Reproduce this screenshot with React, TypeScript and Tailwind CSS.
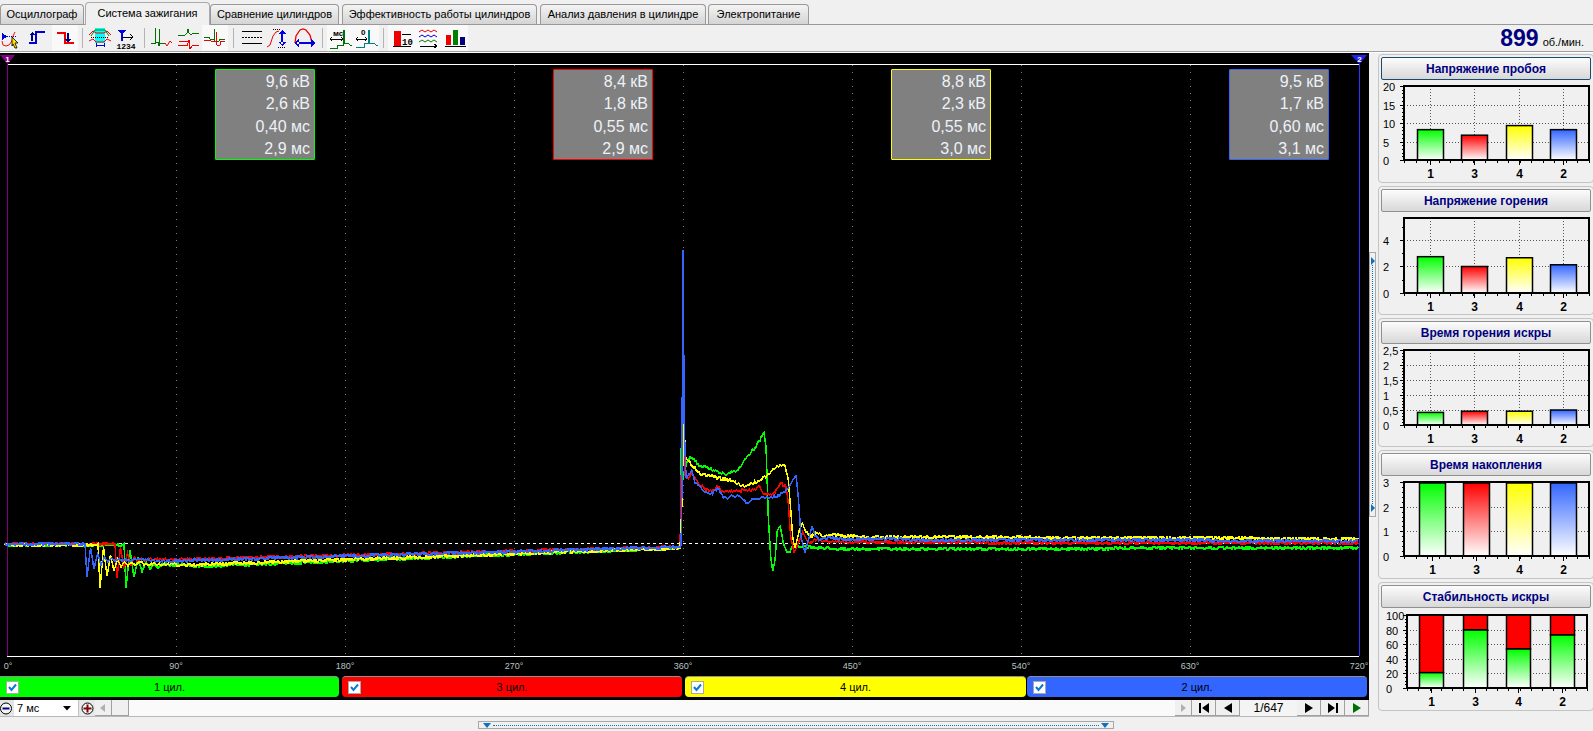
import { ReactNode } from "react";

const GREEN = "#00ff00";
const RED = "#ff0000";
const YELLOW = "#ffff00";
const BLUE = "#3366ff";

const tabs = [
    { label: "Осциллограф", cls: "w-[84px]" },
    { label: "Система зажигания", cls: "w-[125px] ml-[1px]", active: true },
    { label: "Сравнение цилиндров", cls: "w-[129px]" },
    { label: "Эффективность работы цилиндров", cls: "w-[195px] ml-[3px]" },
    { label: "Анализ давления в цилиндре", cls: "w-[166px] ml-[3px]" },
    { label: "Электропитание", cls: "w-[101px] ml-[2px]" },
];

const Tabs = () => (
    <div className="h-[25px] flex items-end border-b border-[#999999] shrink-0 bg-[#f0f0f0] text-[11px] text-black whitespace-nowrap">
        {tabs.map((t) =>
            t.active ? (
                <div key={t.label} className={`${t.cls} h-[23px] -mb-[1px] pb-[2px] flex items-center justify-center bg-[#f0f0f0] border border-b-0 border-[#aaaaaa] rounded-t-[4px]`}>
                    {t.label}
                </div>
            ) : (
                <div key={t.label} className={`${t.cls} h-[20px] flex items-center justify-center bg-gradient-to-b from-[#f4f4f4] to-[#d4d4d4] border border-b-0 border-[#999999] rounded-t-[4px]`}>
                    {t.label}
                </div>
            )
        )}
    </div>
);

const Icon = ({ children, on, w = "w-[26px]" }: { children: ReactNode; on?: boolean; w?: string }) => (
    <div className={`${w} h-[26px] shrink-0 ${on ? "bg-[#f9f9f9]" : ""}`}>
        <svg viewBox="0 0 26 26" className="w-[26px] h-[26px]" fill="none" shapeRendering="crispEdges">
            {children}
        </svg>
    </div>
);

const Sep = ({ w }: { w: string }) => (
    <div className={`${w} h-[26px] shrink-0 flex justify-center py-[3px]`}>
        <div className="w-[1px] bg-[#b4b4b4]" />
    </div>
);

const Toolbar = () => (
    <div className="h-[27px] flex border-b border-[#a0a0a0] shrink-0 bg-[#f0f0f0]">
        <Icon>
            <path d="M2 8v7l5-3.500z" fill="#0000e0" />
            <path d="M7 11h9" stroke="#0000e0" strokeDasharray="1 1" />
            <path d="M2 16l1 4 3 1 3-1 3-4 1-5 2-4" stroke="#ee1010" shapeRendering="auto" />
            <path d="M12 12l6 6h-3l2 5h-2l-2-4-1 2z" fill="#ffe000" stroke="#000000" strokeWidth="0.800" shapeRendering="auto" />
        </Icon>
        <Icon>
            <path d="M3 18h7V7h9" stroke="#0000d0" strokeWidth="1.500" />
            <path d="M3 10l3-3 3 3zM5 10h2v6H5z" fill="#000080" />
        </Icon>
        <Icon on>
            <path d="M5 8h8v10h9" stroke="#ee0000" strokeWidth="1.500" />
            <path d="M15 8h2v7h-2zM13 14h6l-3 4z" fill="#000080" />
        </Icon>
        <Sep w="w-[9px]" />
        <Icon>
            <rect x="8" y="3" width="10" height="15" fill="#00ffff" />
            <path d="M2 10l4-4 3 2h8l3-2 4 4" stroke="#ee0000" shapeRendering="auto" />
            <path d="M2 16l4-2 3 3h8l3-3 4 2" stroke="#ee0000" shapeRendering="auto" />
            <path d="M4 11l4-6h10l4 6" stroke="#008000" shapeRendering="auto" />
            <path d="M4 12h18" stroke="#000000" strokeDasharray="1 1" />
            <path d="M9 20h8M9 18v4M17 18v4" stroke="#0000e0" />
        </Icon>
        <Icon>
            <path d="M5 5h8l-4 5zM8 8h2v8H8z" fill="#0000e0" />
            <path d="M9 12h11M17 9l3 3-3 3" stroke="#000000" />
            <text x="13" y="24" textAnchor="middle" fontSize="8" fontWeight="700" fontFamily="Liberation Mono, monospace" fill="#000000">1234</text>
        </Icon>
        <Sep w="w-[11px]" />
        <Icon>
            <path d="M1 18h4V3l1 14h2v3h1V4l1 14h5" stroke="#007000" />
            <path d="M15 18l2 3 3-5 2 2" stroke="#ee0000" shapeRendering="auto" />
        </Icon>
        <Icon>
            <path d="M2 10h7l2-2 1-4 1 4 2 2 2-2h6" stroke="#007000" />
            <path d="M2 20h7l2 1 2-6 1 9 2-3 2-1h5" stroke="#ee0000" />
            <path d="M3 16h9" stroke="#ee0000" />
        </Icon>
        <Icon on>
            <path d="M2 12h5l1 2h4V4l1 12h4l1-2h5" stroke="#007000" />
            <path d="M2 15h6l1 1h5V7l1 13h3l1-4h4" stroke="#ee0000" />
        </Icon>
        <Sep w="w-[11px]" />
        <Icon>
            <path d="M3 6h20M3 18h20" stroke="#000000" />
            <path d="M3 12h20" stroke="#000000" strokeDasharray="2 1" />
        </Icon>
        <Icon>
            <path d="M2 22l3-2 3-9 3-4 3-1" stroke="#ee0000" shapeRendering="auto" />
            <path d="M8 4h8" stroke="#000000" strokeDasharray="1 1" />
            <path d="M13 22h8" stroke="#000000" strokeDasharray="1 1" />
            <path d="M16 7h2v12h-2zM13 9l4-4 4 4zM13 17l4 4 4-4z" fill="#0000e0" />
        </Icon>
        <Icon>
            <path d="M4 18l1-7 4-6 3-1 3 1 4 5 2 8" stroke="#ee0000" strokeWidth="1.300" shapeRendering="auto" />
            <path d="M6 17h16v2H6zM8 14l-5 4 5 4zM20 14l5 4-5 4z" fill="#0000e0" />
        </Icon>
        <Sep w="w-[10px]" />
        <Icon on>
            <text x="6" y="11" fontSize="8" fontWeight="700" fontFamily="Liberation Sans, sans-serif" fill="#000000">мс</text>
            <path d="M3 14h13M3 14l2-2M3 14l2 2M16 14l-2-2M16 14l-2 2" stroke="#000000" />
            <path d="M3 23h7v-3h6V5h1v13h4l2 2h2" stroke="#007000" />
        </Icon>
        <Icon on>
            <text x="8" y="10" fontSize="8" fontWeight="700" fontFamily="Liberation Sans, sans-serif" fill="#000000">0</text>
            <path d="M3 14h11M3 14l2-2M3 14l2 2M14 14l-2-2M14 14l-2 2" stroke="#000000" />
            <path d="M3 22h8v-4h4V5h1v13h5l2 2h2" stroke="#008080" />
        </Icon>
        <Sep w="w-[9px]" />
        <Icon on w="w-[27px]">
            <rect x="6" y="6" width="7" height="15" fill="#ee0000" />
            <path d="M14 9h9M5 21h18" stroke="#000000" />
            <text x="14" y="20" fontSize="9" fontWeight="700" fontFamily="Liberation Mono, monospace" fill="#000000">10</text>
        </Icon>
        <Icon on w="w-[27px]">
            <path d="M4 7l3-2 3 2 3-2 3 2 3-2 3 2" stroke="#ee0000" shapeRendering="auto" />
            <path d="M4 12l3-2 3 2 3-2 3 2 3-2 3 2" stroke="#0000e0" shapeRendering="auto" />
            <path d="M4 17l3-2 3 2 3-2 3 2 3-2 3 2" stroke="#008000" shapeRendering="auto" />
            <path d="M5 21h17M19 19l3 2-3 2" stroke="#000000" />
        </Icon>
        <Icon on w="w-[26px]">
            <rect x="4" y="10" width="5" height="10" fill="#ee0000" />
            <rect x="11" y="5" width="5" height="15" fill="#008000" />
            <rect x="18" y="12" width="5" height="8" fill="#000080" />
            <path d="M3 21h21" stroke="#000000" />
        </Icon>
        <div className="flex-1" />
        <div className="flex items-baseline pr-[9px] text-[#000080] leading-none pt-[2px]">
            <span className="text-[23px] font-bold">899</span>
            <span className="text-[11px] text-[#000000] ml-[4px]">об./мин.</span>
        </div>
    </div>
);

// simple repeatable noise, the traces must look the same on every load
const seeded = (seed: number) => () => {
    seed = (seed * 1664525 + 1013904223) % 4294967296;
    return seed / 4294967296;
};

type Pt = [number, number];

const ringing = (x0: number, amp: number, period: number, cycles: number, base: number): Pt[] => {
    const out: Pt[] = [[x0, 544]];
    for (let i = 0; i < cycles * 2; i++) {
        const x = x0 + 2 + (i * period) / 2;
        const a = amp * Math.pow(0.72, i);
        out.push([x, base + (i % 2 === 0 ? a : -a)]);
    }
    return out;
};

const z = (x: number, y: number): Pt => [640 + x / 3, 380 + y / 3];

const buildTrace = (anchors: Pt[], seed: number, noise: number) => {
    const rnd = seeded(seed);
    const pts: string[] = [];
    for (let i = 0; i < anchors.length - 1; i++) {
        const [x1, y1] = anchors[i];
        const [x2, y2] = anchors[i + 1];
        const steps = Math.max(1, Math.round(x2 - x1));
        for (let s = 0; s < steps; s++) {
            const x = x1 + ((x2 - x1) * s) / steps;
            const y = y1 + ((y2 - y1) * s) / steps;
            const n = steps > 4 ? Math.round((rnd() - 0.5) * noise) : 0;
            pts.push(`${x.toFixed(1)},${Math.round(y) + n}`);
        }
    }
    return pts.join(" ");
};

const tailOf = (y: number): Pt[] => [[1359, y]];

const traces = [
    {
        color: GREEN,
        points: buildTrace(
            [
                [5, 545], [122, 545],
                ...ringing(124, 22, 8, 5, 566),
                [210, 566], [680, 548],
                z(122, 455), z(124, 190), z(128, 300), z(136, 260), z(150, 228), z(180, 258), z(210, 265), z(230, 275), z(260, 282), z(295, 268), z(320, 230), z(345, 205), z(372, 158), z(378, 200), z(385, 410), z(392, 530), z(398, 573), z(405, 540), z(412, 450), z(421, 437), z(430, 490), z(440, 515), z(450, 515), z(460, 490), z(480, 500), z(510, 500), z(540, 505), z(660, 507),
                ...tailOf(548),
            ],
            11, 2.500
        ),
    },
    {
        color: RED,
        points: buildTrace(
            [
                [5, 544], [114, 544],
                ...ringing(115, 18, 7, 5, 560),
                [200, 559], [680, 547],
                z(122, 400), z(125, 200), z(130, 160), z(136, 290), z(145, 298), z(155, 280), z(175, 310), z(195, 325), z(215, 335), z(230, 320), z(250, 332), z(300, 332), z(340, 328), z(360, 320), z(368, 340), z(400, 345), z(420, 310), z(438, 320), z(445, 370), z(452, 470), z(462, 515), z(475, 490), z(488, 455), z(500, 480), z(510, 490), z(530, 478), z(560, 485), z(660, 487),
                ...tailOf(543),
            ],
            23, 2
        ),
    },
    {
        color: YELLOW,
        points: buildTrace(
            [
                [5, 545], [97, 545],
                ...ringing(98, 24, 7, 6, 564),
                [190, 565], [680, 548],
                z(125, 390), z(132, 115), z(136, 230), z(150, 250), z(180, 280), z(210, 288), z(240, 295), z(270, 300), z(310, 318), z(350, 305), z(380, 288), z(410, 260), z(435, 258), z(445, 300), z(453, 400), z(458, 470), z(465, 505), z(478, 450), z(487, 428), z(495, 450), z(510, 470), z(530, 458), z(550, 470), z(570, 465), z(660, 470),
                ...tailOf(539),
            ],
            37, 3
        ),
    },
    {
        color: BLUE,
        points: buildTrace(
            [
                [5, 544], [84, 544],
                ...ringing(85, 17, 7, 6, 560),
                [170, 561], [680, 547],
                [681, 545], z(125, 400), [683, 250], z(133, 150), z(138, 295), z(155, 270), z(165, 305), z(185, 328), z(215, 340), z(235, 325), z(250, 350), z(265, 355), z(275, 345), z(305, 352), z(320, 370), z(345, 355), z(385, 352), z(420, 345), z(445, 325), z(455, 305), z(468, 288), z(475, 350), z(483, 470), z(495, 518), z(505, 480), z(516, 440), z(525, 465), z(540, 480), z(570, 470), z(600, 478), z(660, 478),
                ...tailOf(541),
            ],
            51, 2.500
        ),
    },
];

const gridX = [176, 345, 514, 683, 852, 1021, 1190];
const axis = [
    { x: 8, t: "0°" }, { x: 176, t: "90°" }, { x: 345, t: "180°" }, { x: 514, t: "270°" }, { x: 683, t: "360°" },
    { x: 852, t: "450°" }, { x: 1021, t: "540°" }, { x: 1190, t: "630°" }, { x: 1359, t: "720°" },
];

const infoBoxes = [
    { left: "left-[215px]", border: "border-[#00ff00]", rows: ["9,6 кВ", "2,6 кВ", "0,40 мс", "2,9 мс"] },
    { left: "left-[553px]", border: "border-[#ff0000]", rows: ["8,4 кВ", "1,8 кВ", "0,55 мс", "2,9 мс"] },
    { left: "left-[891px]", border: "border-[#ffff00]", rows: ["8,8 кВ", "2,3 кВ", "0,55 мс", "3,0 мс"] },
    { left: "left-[1229px]", border: "border-[#3366ff]", rows: ["9,5 кВ", "1,7 кВ", "0,60 мс", "3,1 мс"] },
];

const Scope = () => (
    <div className="relative h-[623px] bg-black shrink-0">
        <svg viewBox="0 53 1369 623" className="block w-[1369px] h-[623px]" fill="none">
            {gridX.map((x) => (
                <path key={x} d={`M${x + 0.5} 65V656`} stroke="#7a7a7a" strokeDasharray="1 6" />
            ))}
            <path d="M7 64.500H1359M7 656.500H1359" stroke="#ffffff" />
            <path d="M7.500 64V656" stroke="#800080" />
            <path d="M1359.500 64V656" stroke="#3333ff" />
            <path d="M5 543.500H1359" stroke="#ffffff" strokeDasharray="3 3" />
            {traces.map((t) => (
                <polyline key={t.color} points={t.points} stroke={t.color} strokeWidth="1.500" shapeRendering="crispEdges" />
            ))}
            <path d="M0 55H15L7.500 64Z" fill="#800080" />
            <text x="7.500" y="62" textAnchor="middle" fontSize="8" fontWeight="700" fontFamily="Liberation Sans, sans-serif" fill="#ffffff">1</text>
            <path d="M1351 55H1367L1359.500 64Z" fill="#2222ee" />
            <text x="1359.500" y="62" textAnchor="middle" fontSize="8" fontWeight="700" fontFamily="Liberation Sans, sans-serif" fill="#ffffff">2</text>
            {axis.map((a) => (
                <text key={a.t} x={a.x} y="669" textAnchor="middle" fontSize="9" fontFamily="Liberation Sans, sans-serif" fill="#b8c4c4">
                    {a.t}
                </text>
            ))}
        </svg>
        {infoBoxes.map((b) => (
            <div key={b.left} className={`absolute top-[16px] ${b.left} w-[100px] h-[91px] border ${b.border} bg-[#808080] rounded-[1px] flex flex-col items-end justify-center pt-[2px] pr-[4px] text-[16px] leading-[22.400px] text-[#eef2f8]`}>
                {b.rows.map((r, i) => (
                    <div key={i}>{r}</div>
                ))}
            </div>
        ))}
    </div>
);

const Check = () => (
    <div className="w-[13px] h-[13px] bg-white border border-[#a8a8a8] flex items-center justify-center shrink-0">
        <svg viewBox="0 0 11 11" className="w-[11px] h-[11px]" fill="none">
            <path d="M2 5l2.500 3L9 2.500" stroke="#0a78d8" strokeWidth="2" />
        </svg>
    </div>
);

const cylinders = [
    { label: "1 цил.", bg: "bg-[#00ff00]", w: "w-[339px]", ml: "ml-0", rounded: "rounded-r-[4px]" },
    { label: "3 цил.", bg: "bg-[#ff0000]", w: "w-[340px]", ml: "ml-[3px]", rounded: "rounded-[4px]" },
    { label: "4 цил.", bg: "bg-[#ffff00]", w: "w-[341px]", ml: "ml-[3px]", rounded: "rounded-[4px]" },
    { label: "2 цил.", bg: "bg-[#3366ff]", w: "w-[340px]", ml: "ml-[1px]", rounded: "rounded-[4px]" },
];

const CylinderBar = () => (
    <div className="h-[24px] bg-black flex shrink-0 pb-[3px]">
        {cylinders.map((c) => (
            <div key={c.label} className={`${c.w} ${c.ml} ${c.bg} ${c.rounded} relative flex items-center justify-center border-t border-[#909090] text-[11px] text-black`}>
                <div className="absolute left-[6px] top-[4px]">
                    <Check />
                </div>
                {c.label}
            </div>
        ))}
    </div>
);

const NavBtn = ({ children, w = "w-[24px]" }: { children: ReactNode; w?: string }) => (
    <div className={`${w} h-[16px] shrink-0 flex items-center justify-center bg-[#f0f0f0] border-r border-b border-[#a0a0a0]`}>
        <svg viewBox="0 0 12 10" className="w-[12px] h-[10px]">
            {children}
        </svg>
    </div>
);

const Controls = () => (
    <div className="h-[17px] flex items-stretch border-b border-[#b8b8b8] bg-[#fafafa] shrink-0">
        <div className="w-[14px] h-[16px] flex items-center bg-[#e4e4e4]">
            <svg viewBox="0 0 13 13" className="w-[13px] h-[13px]">
                <circle cx="6" cy="6.500" r="5.500" fill="#f4f4f4" stroke="#000000" />
                <path d="M2.500 5.500h7v2h-7z" fill="#000080" />
            </svg>
        </div>
        <div className="w-[64px] h-[16px] bg-white flex items-center justify-between pl-[3px] pr-[7px] text-[11px] text-black">
            7 мс
            <svg viewBox="0 0 8 5" className="w-[8px] h-[5px]">
                <path d="M0 0h8L4 4.500z" fill="#000000" />
            </svg>
        </div>
        <div className="w-[17px] h-[16px] flex items-center justify-center bg-[#e8e8e8] border-l border-[#c0c0c0]">
            <svg viewBox="0 0 13 13" className="w-[13px] h-[13px]">
                <circle cx="6.500" cy="6.500" r="5.500" fill="#f4f4f4" stroke="#000000" />
                <path d="M2.500 5.500h8v2h-8zM5.500 2.500h2v8h-2z" fill="#800000" />
            </svg>
        </div>
        <NavBtn w="w-[17px]">
            <path d="M8 1v8L3 5z" fill="#b0b0b0" />
        </NavBtn>
        <NavBtn w="w-[17px]">
            <path d="" />
        </NavBtn>
        <div className="flex-1" />
        <NavBtn w="w-[17px]">
            <path d="M4 1v8l5-4z" fill="#b0b0b0" />
        </NavBtn>
        <NavBtn>
            <path d="M1 0h2v10H1zM11 0v10L4 5z" fill="#000000" />
        </NavBtn>
        <NavBtn>
            <path d="M10 0v10L2 5z" fill="#000000" />
        </NavBtn>
        <div className="w-[57px] h-[16px] flex items-center justify-center bg-[#f4f4f4] text-[12px] text-black">1/647</div>
        <NavBtn>
            <path d="M2 0v10l8-5z" fill="#000000" />
        </NavBtn>
        <NavBtn>
            <path d="M1 0v10l7-5zM9 0h2v10H9z" fill="#000000" />
        </NavBtn>
        <NavBtn>
            <path d="M2 0v10l8-5z" fill="#007000" />
        </NavBtn>
    </div>
);

const BottomSplitter = () => (
    <div className="ml-[478px] mt-[4px] w-[636px] h-[8px] border border-[#a8a8a8] bg-[#f0f0f0] flex items-center justify-between px-[4px] shrink-0">
        <svg viewBox="0 0 8 5" className="w-[8px] h-[5px] shrink-0">
            <path d="M0 0h8L4 5z" fill="#1070c0" />
        </svg>
        <div className="flex-1 mx-[2px] border-t border-dotted border-[#1070c0]" />
        <svg viewBox="0 0 8 5" className="w-[8px] h-[5px] shrink-0">
            <path d="M0 0h8L4 5z" fill="#1070c0" />
        </svg>
    </div>
);

const SideSplitter = () => (
    <div className="w-[8px] shrink-0 pt-[199px]">
        <div className="w-[7px] h-[265px] border border-[#a8a8a8] flex flex-col items-center justify-between py-[4px]">
            <svg viewBox="0 0 4 8" className="w-[4px] h-[8px] shrink-0">
                <path d="M0 0v8l4-4z" fill="#1070c0" />
            </svg>
            <div className="flex-1 border-l border-dotted border-[#1070c0]" />
            <svg viewBox="0 0 4 8" className="w-[4px] h-[8px] shrink-0">
                <path d="M0 0v8l4-4z" fill="#1070c0" />
            </svg>
        </div>
    </div>
);

type Bar = { color: string; v: number };
type ChartDef = {
    title: string;
    focus?: boolean;
    left: number;
    right: number;
    top: number;
    bottom: number;
    max: number;
    labelX: number;
    ticks: { v: number; t: string }[];
    minorStep: number;
    bars: Bar[];
    barW: number;
    cats: number[];
    stacked?: boolean;
};

const CATS = [1430, 1474, 1519, 1563];
const names = ["1", "3", "4", "2"];
const colors = [GREEN, RED, YELLOW, BLUE];
const bars4 = (vals: number[]) => vals.map((v, i) => ({ color: colors[i], v }));

// y values are measured from the bottom edge of the title button
const charts: ChartDef[] = [
    {
        title: "Напряжение пробоя", focus: true, left: 1404, right: 1589, top: 6, bottom: 80, max: 20, minorStep: 1, labelX: 1383,
        ticks: [{ v: 0, t: "0" }, { v: 5, t: "5" }, { v: 10, t: "10" }, { v: 15, t: "15" }, { v: 20, t: "20" }],
        bars: bars4([8.2, 6.7, 9.3, 8.2]), barW: 26, cats: CATS,
    },
    {
        title: "Напряжение горения", left: 1404, right: 1589, top: 6, bottom: 81, max: 5.66, minorStep: 1, labelX: 1383,
        ticks: [{ v: 0, t: "0" }, { v: 2, t: "2" }, { v: 4, t: "4" }],
        bars: bars4([2.74, 2.0, 2.66, 2.13]), barW: 26, cats: CATS,
    },
    {
        title: "Время горения искры", left: 1404, right: 1589, top: 6, bottom: 81, max: 2.5, minorStep: 0.1, labelX: 1383,
        ticks: [{ v: 0, t: "0" }, { v: 0.5, t: "0,5" }, { v: 1, t: "1" }, { v: 1.5, t: "1,5" }, { v: 2, t: "2" }, { v: 2.5, t: "2,5" }],
        bars: bars4([0.42, 0.46, 0.46, 0.5]), barW: 26, cats: CATS,
    },
    {
        title: "Время накопления", left: 1404, right: 1589, top: 6, bottom: 80, max: 3, minorStep: 0.2, labelX: 1383,
        ticks: [{ v: 0, t: "0" }, { v: 1, t: "1" }, { v: 2, t: "2" }, { v: 3, t: "3" }],
        bars: bars4([2.96, 2.96, 2.96, 2.96]), barW: 26, cats: [1432, 1476, 1519, 1563],
    },
    {
        title: "Стабильность искры", left: 1407, right: 1587, top: 7, bottom: 80, max: 100, minorStep: 5, labelX: 1386, stacked: true,
        ticks: [{ v: 0, t: "0" }, { v: 20, t: "20" }, { v: 40, t: "40" }, { v: 60, t: "60" }, { v: 80, t: "80" }, { v: 100, t: "100" }],
        bars: [21, 79.5, 53.4, 72.6].map((v) => ({ color: GREEN, v })), barW: 24, cats: [1431, 1475, 1518, 1562],
    },
];

const gradients = [
    { id: "g-green", c: GREEN },
    { id: "g-red", c: RED },
    { id: "g-yellow", c: YELLOW },
    { id: "g-blue", c: BLUE },
];
const gradOf = (c: string) => `url(#${gradients.find((g) => g.c === c)?.id})`;

const Chart = ({ def }: { def: ChartDef }) => {
    const { left, right, top, bottom, max } = def;
    const h = bottom - top;
    const yOf = (v: number) => bottom - (v / max) * h;
    const step = (right - left) / 16;
    const xMinor = Array.from({ length: 17 }, (_, i) => left + i * step);
    const yMinor = Array.from({ length: Math.floor(max / def.minorStep + 0.01) + 1 }, (_, i) => yOf(i * def.minorStep));
    return (
        <svg viewBox="1381 0 212 104" className="block w-[212px] h-[104px]" fill="none">
            <defs>
                {gradients.map((g) => (
                    <linearGradient key={g.id} id={g.id} x1="0" y1="0" x2="0" y2="1">
                        <stop offset="0" stopColor={g.c} />
                        <stop offset="1" stopColor="#ffffff" />
                    </linearGradient>
                ))}
            </defs>
            {def.ticks.map((t) => (
                <g key={t.t}>
                    {t.v > 0 && t.v < max && <path d={`M${left} ${Math.round(yOf(t.v)) + 0.5}H${right}`} stroke="#555555" strokeDasharray="1 2" />}
                    <path d={`M${left - 4} ${Math.round(yOf(t.v)) + 0.5}H${left}`} stroke="#000000" />
                    <text x={def.labelX} y={yOf(t.v) + 5} fontSize="11" fontFamily="Liberation Sans, sans-serif" fill="#000000">
                        {t.t}
                    </text>
                </g>
            ))}
            {def.cats.map((x) => (
                <path key={x} d={`M${x + 0.5} ${top}V${bottom}`} stroke="#555555" strokeDasharray="1 2" />
            ))}
            {yMinor.map((y, i) => (
                <path key={i} d={`M${left - 2} ${Math.round(y) + 0.5}H${left}`} stroke="#000000" />
            ))}
            {xMinor.map((x, i) => (
                <path key={i} d={`M${Math.round(x) + 0.5} ${bottom}v3`} stroke="#000000" />
            ))}
            {def.cats.map((x, i) => (
                <g key={x}>
                    <path d={`M${x + 0.5} ${bottom}v5`} stroke="#000000" />
                    <text x={x + 0.5} y={bottom + 18} textAnchor="middle" fontSize="12" fontWeight="700" fontFamily="Liberation Sans, sans-serif" fill="#000000">
                        {names[i]}
                    </text>
                </g>
            ))}
            {def.bars.map((b, i) => {
                const x = def.cats[i] - def.barW / 2 + 0.5;
                const y = yOf(b.v);
                return (
                    <g key={i}>
                        {def.stacked && <rect x={x} y={top} width={def.barW} height={y - top} fill={RED} stroke="#000000" strokeWidth="1.500" />}
                        <rect x={x} y={y} width={def.barW} height={bottom - y} fill={gradOf(b.color)} stroke="#000000" strokeWidth={1.5} />
                    </g>
                );
            })}
            <rect x={left} y={top} width={right - left} height={h} stroke="#000000" strokeWidth="2" />
        </svg>
    );
};

const ChartPanel = ({ def }: { def: ChartDef }) => (
    <div className="h-[129px] w-[216px] border border-[#c4c4c4] rounded-[4px] pt-[2px] px-[2px] shrink-0 overflow-hidden">
        <div className={`h-[23px] w-[210px] flex items-center justify-center border rounded-[2px] bg-gradient-to-b from-[#fcfcfc] to-[#d8d8d8] text-[12px] font-bold text-[#000080] ${def.focus ? "border-[#1c4a6c]" : "border-[#909090]"}`}>
            {def.title}
        </div>
        <Chart def={def} />
    </div>
);

export default function App() {
    return (
        <div className="w-[1593px] h-[731px] overflow-hidden bg-[#f0f0f0] flex flex-col font-['Liberation_Sans',Arial,sans-serif]">
            <Tabs />
            <Toolbar />
            <div className="flex flex-1 border-t border-white">
                <div className="w-[1369px] shrink-0 flex flex-col">
                    <Scope />
                    <CylinderBar />
                    <Controls />
                    <BottomSplitter />
                </div>
                <SideSplitter />
                <div className="w-[216px] pl-[1px] pt-[1px] flex flex-col gap-[3px]">
                    {charts.map((c) => (
                        <ChartPanel key={c.title} def={c} />
                    ))}
                </div>
            </div>
        </div>
    );
}
